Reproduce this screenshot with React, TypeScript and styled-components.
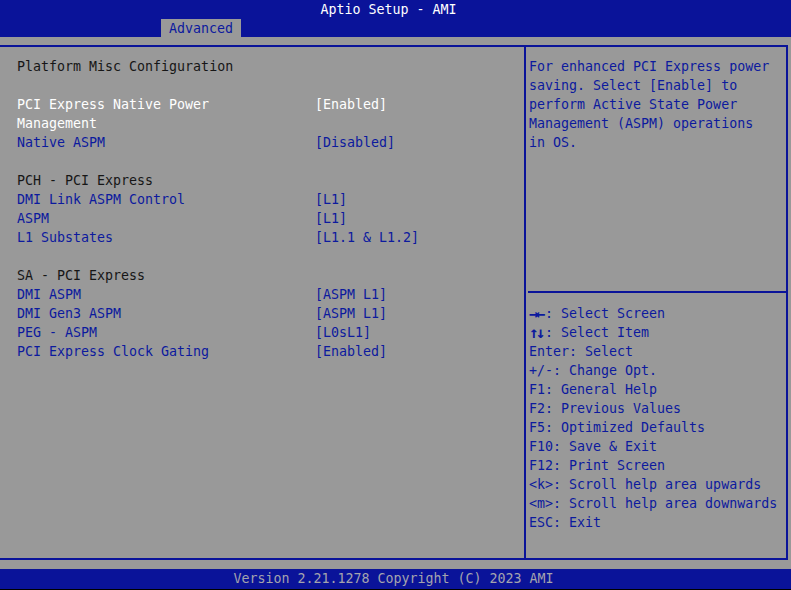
import styled, { createGlobalStyle } from 'styled-components';

const blue = '#0a1399';
const ink = '#0c1a9e';
const gray = '#999999';

const GlobalStyle = createGlobalStyle`
  html, body {
    margin: 0;
    padding: 0;
    background: ${gray};
  }
  body {
    font-family: 'DejaVu Sans Mono', 'Liberation Mono', monospace;
    font-size: 13.3px;
    line-height: 19px;
  }
`;

const Screen = styled.div`
  display: flex;
  flex-direction: column;
  width: 791px;
  height: 590px;
  overflow: hidden;
  background: ${gray};
`;

const Header = styled.header`
  background: ${blue};
  height: 37px;
  display: flex;
  flex-direction: column;
`;

const Title = styled.div`
  color: #ffffff;
  text-align: center;
  height: 19px;
  padding-right: 14px;
`;

const Tabs = styled.div`
  display: flex;
  padding-left: 161px;
`;

const Tab = styled.div`
  background: ${gray};
  color: ${ink};
  height: 18px;
  line-height: 19px;
  padding: 0 8px;
`;

const Main = styled.main`
  margin-top: 8px;
  margin-right: 3px;
  height: 512px;
  border: 2px solid ${blue};
  border-left: none;
  display: grid;
  grid-template-columns: 524px 2px 1fr;
`;

const Divider = styled.div`
  background: ${blue};
`;

const LeftPane = styled.section`
  padding: 10px 0 0 17px;
`;

const Row = styled.div`
  display: grid;
  grid-template-columns: 216px 82px 1fr;
  min-height: 19px;
`;

const Label = styled.div<{ $tone: 'head' | 'item' | 'active' }>`
  grid-column: ${p => (p.$tone === 'head' ? '1 / 4' : '1')};
  color: ${p => (p.$tone === 'head' ? '#161616' : p.$tone === 'active' ? '#ffffff' : ink)};
`;

const Value = styled.div<{ $active?: boolean }>`
  grid-column: 3;
  color: ${p => (p.$active ? '#ffffff' : ink)};
  white-space: pre;
`;

const RightPane = styled.aside`
  display: flex;
  flex-direction: column;
  color: ${ink};
`;

const Help = styled.div`
  flex: 1;
  padding: 10px 0 0 3px;
`;

const Separator = styled.div`
  height: 2px;
  margin-left: 2px;
  background: ${blue};
`;

const Keys = styled.div`
  padding: 11px 0 26px 3px;
`;

const KeyLine = styled.div`
  white-space: pre;
`;

const Arrows = styled.span`
  display: inline-block;
  width: 16px;
  font-size: 16px;
  font-weight: bold;
  letter-spacing: -3px;
  line-height: 19px;
  vertical-align: top;
`;

const Footer = styled.footer`
  margin-top: 9px;
  height: 20px;
  background: ${blue};
  color: #a4a4ae;
  text-align: center;
  line-height: 20px;
  padding-right: 4px;
  border-bottom: 1px solid #000000;
`;

type Item = { label: string; value?: string; tone: 'head' | 'item' | 'active' } | null;

const items: Item[] = [
  { label: 'Platform Misc Configuration', tone: 'head' },
  null,
  { label: 'PCI Express Native Power Management', value: '[Enabled]', tone: 'active' },
  { label: 'Native ASPM', value: '[Disabled]', tone: 'item' },
  null,
  { label: 'PCH - PCI Express', tone: 'head' },
  { label: 'DMI Link ASPM Control', value: '[L1]', tone: 'item' },
  { label: 'ASPM', value: '[L1]', tone: 'item' },
  { label: 'L1 Substates', value: '[L1.1 & L1.2]', tone: 'item' },
  null,
  { label: 'SA - PCI Express', tone: 'head' },
  { label: 'DMI ASPM', value: '[ASPM L1]', tone: 'item' },
  { label: 'DMI Gen3 ASPM', value: '[ASPM L1]', tone: 'item' },
  { label: 'PEG - ASPM', value: '[L0sL1]', tone: 'item' },
  { label: 'PCI Express Clock Gating', value: '[Enabled]', tone: 'item' },
];

const helpLines = [
  'For enhanced PCI Express power',
  'saving. Select [Enable] to',
  'perform Active State Power',
  'Management (ASPM) operations',
  'in OS.',
];

const keyLines = [
  'Enter: Select',
  '+/-: Change Opt.',
  'F1: General Help',
  'F2: Previous Values',
  'F5: Optimized Defaults',
  'F10: Save & Exit',
  'F12: Print Screen',
  '<k>: Scroll help area upwards',
  '<m>: Scroll help area downwards',
  'ESC: Exit',
];

const App = () => (
  <>
    <GlobalStyle />
    <Screen>
      <Header>
        <Title>Aptio Setup - AMI</Title>
        <Tabs>
          <Tab>Advanced</Tab>
        </Tabs>
      </Header>
      <Main>
        <LeftPane>
          {items.map((item, i) =>
            item ? (
              <Row key={i}>
                <Label $tone={item.tone}>{item.label}</Label>
                {item.value && <Value $active={item.tone === 'active'}>{item.value}</Value>}
              </Row>
            ) : (
              <Row key={i} />
            )
          )}
        </LeftPane>
        <Divider />
        <RightPane>
          <Help>
            {helpLines.map(line => (
              <div key={line}>{line}</div>
            ))}
          </Help>
          <Separator />
          <Keys>
            <KeyLine>
              <Arrows>→←</Arrows>: Select Screen
            </KeyLine>
            <KeyLine>
              <Arrows>↑↓</Arrows>: Select Item
            </KeyLine>
            {keyLines.map(line => (
              <KeyLine key={line}>{line}</KeyLine>
            ))}
          </Keys>
        </RightPane>
      </Main>
      <Footer>Version 2.21.1278 Copyright (C) 2023 AMI</Footer>
    </Screen>
  </>
);

export default App;
